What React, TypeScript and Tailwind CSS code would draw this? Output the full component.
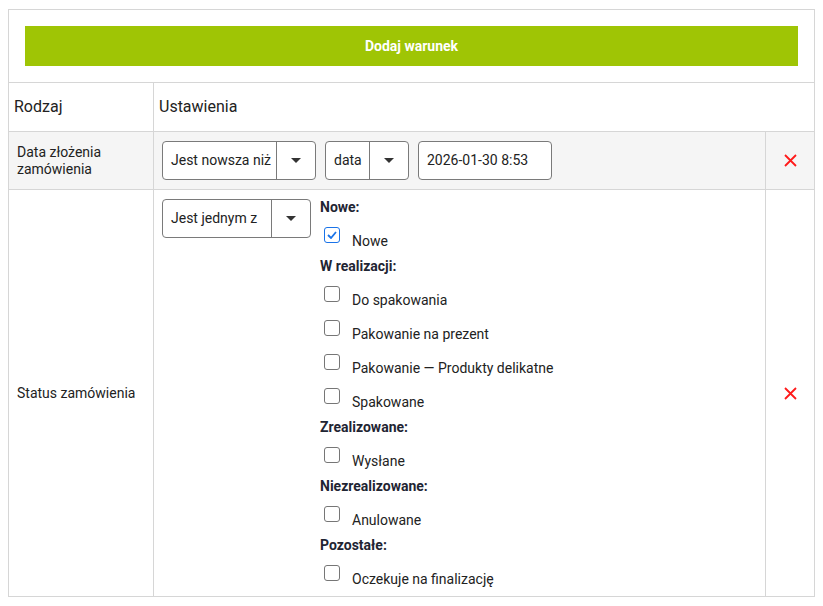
import React from 'react'

const groups: { title: string; items: { label: string; checked?: boolean }[] }[] = [
  { title: 'Nowe:', items: [{ label: 'Nowe', checked: true }] },
  {
    title: 'W realizacji:',
    items: [
      { label: 'Do spakowania' },
      { label: 'Pakowanie na prezent' },
      { label: 'Pakowanie — Produkty delikatne' },
      { label: 'Spakowane' },
    ],
  },
  { title: 'Zrealizowane:', items: [{ label: 'Wysłane' }] },
  { title: 'Niezrealizowane:', items: [{ label: 'Anulowane' }] },
  { title: 'Pozostałe:', items: [{ label: 'Oczekuje na finalizację' }] },
]

function Caret() {
  return (
    <svg width="10" height="5" viewBox="0 0 10 5">
      <path d="M0 0h10L5 5z" fill="#333" />
    </svg>
  )
}

function Select({ value, textW }: { value: string; textW: string }) {
  return (
    <div className="flex h-[39px] shrink-0 rounded-[4px] border border-[#7a7a7a] bg-white">
      <div className={`${textW} flex items-center border-r border-[#7a7a7a] pl-[8px] text-[14px] text-[#222]`}>
        {value}
      </div>
      <div className="flex w-[38px] items-center justify-center">
        <Caret />
      </div>
    </div>
  )
}

function RemoveX() {
  return (
    <svg width="13" height="13" viewBox="0 0 13 13">
      <path d="M1 1l11 11M12 1L1 12" stroke="#ff1a1a" strokeWidth="1.8" />
    </svg>
  )
}

function Checkbox({ checked }: { checked?: boolean }) {
  return checked ? (
    <div className="flex h-[16px] w-[16px] items-center justify-center rounded-[3px] border border-[#1a73e8] bg-white">
      <svg width="10" height="8" viewBox="0 0 10 8">
        <path d="M1 4l3 3 5-6" stroke="#1a73e8" strokeWidth="1.8" fill="none" />
      </svg>
    </div>
  ) : (
    <div className="h-[16px] w-[16px] rounded-[3px] border border-[#767676] bg-white" />
  )
}

export default function App() {
  return (
    <div className="min-h-[606px] bg-white pl-[8px] pt-[9px] font-['Roboto','Liberation_Sans',sans-serif] text-[#222]">
      <div className="w-[807px] border border-[#d6d6d6]">
        <div className="pt-[16px] pb-[16px] pl-[16px] pr-[16px]">
          <button className="flex h-[40px] w-full items-center justify-center bg-[#9fc505] text-[14px] font-bold text-white">
            Dodaj warunek
          </button>
        </div>

        <div className="grid grid-cols-[144px_1px_611px_1px_48px] border-t border-[#d6d6d6]">
          {/* header */}
          <div className="flex h-[48px] items-center pl-[5px] text-[16px] text-[#222]">Rodzaj</div>
          <div className="bg-[#d6d6d6]" />
          <div className="col-span-3 flex items-center pl-[5px] text-[16px] text-[#222]">Ustawienia</div>

          {/* row 1 */}
          <div className="col-span-5 h-px bg-[#d6d6d6]" />
          <div className="flex items-center bg-[#f5f5f5] pl-[8px] text-[14px] leading-[17px]">
            Data złożenia
            <br />
            zamówienia
          </div>
          <div className="bg-[#d6d6d6]" />
          <div className="flex gap-[9px] bg-[#f5f5f5] py-[9px] pl-[8px]">
            <Select value="Jest nowsza niż" textW="w-[114px]" />
            <Select value="data" textW="w-[44px]" />
            <div className="flex h-[39px] w-[134px] items-center rounded-[4px] border border-[#7a7a7a] bg-white pl-[8px] text-[14px]">
              2026-01-30 8:53
            </div>
          </div>
          <div className="bg-[#d6d6d6]" />
          <div className="flex items-center justify-center bg-[#f5f5f5]">
            <RemoveX />
          </div>

          {/* row 2 */}
          <div className="col-span-5 h-px bg-[#d6d6d6]" />
          <div className="flex items-center pl-[8px] text-[14px]">Status zamówienia</div>
          <div className="bg-[#d6d6d6]" />
          <div className="flex gap-[9px] py-[9px] pl-[8px]">
            <div className="self-start">
              <Select value="Jest jednym z" textW="w-[109px]" />
            </div>
            <div className="flex flex-col">
              {groups.map((g, gi) => (
                <div key={g.title} className="flex flex-col">
                  <div className={`${gi === 0 ? '' : 'mt-[9px]'} h-[16px] text-[14px] font-bold leading-[16px] text-[#1f2533]`}>
                    {g.title}
                  </div>
                  {g.items.map((it) => (
                    <div key={it.label} className="flex h-[34px] items-start">
                      <div className="ml-[4px] mt-[12px]">
                        <Checkbox checked={it.checked} />
                      </div>
                      <div className="ml-[12px] mt-[18px] text-[14px] leading-[16px] text-[#222]">{it.label}</div>
                    </div>
                  ))}
                </div>
              ))}
            </div>
          </div>
          <div className="bg-[#d6d6d6]" />
          <div className="flex items-center justify-center">
            <RemoveX />
          </div>
        </div>
      </div>
    </div>
  )
}
